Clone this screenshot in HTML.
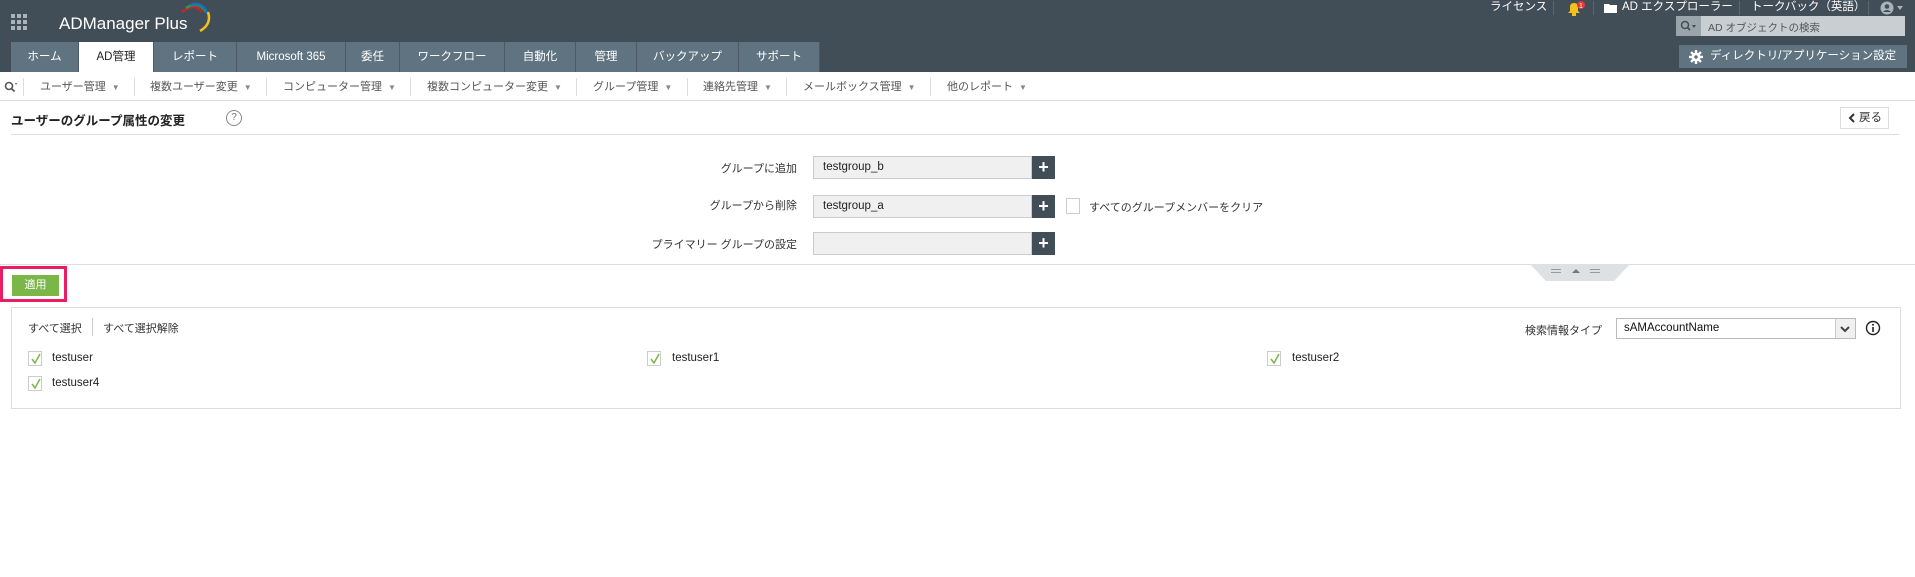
<!DOCTYPE html>
<html><head><meta charset="utf-8"><style>
*{margin:0;padding:0;box-sizing:border-box}
body{width:1915px;height:577px;background:#fff;font-family:"Liberation Sans","Noto Sans CJK JP",sans-serif;font-size:12px;color:#333;position:relative;overflow:hidden}
.abs{position:absolute}
#hdr{left:0;top:0;width:1915px;height:72px;background:#414e58}
.tab{position:absolute;top:42px;height:30px;background:#5f7480;color:#fff;font-size:11.5px;line-height:30px;text-align:center;border-right:1px solid #4b5a64}
.tab.on{background:#fff;color:#222}
.tl{position:absolute;top:0;color:#fff;font-size:11.5px;line-height:14px}
.sn{position:absolute;top:80px;color:#555;font-size:11px;line-height:14px}
.sn i{font-style:normal;color:#888;font-size:8px;margin-left:6px}
.sep{position:absolute;top:78px;width:1px;height:18px;background:#ddd}
.lbl{position:absolute;width:300px;text-align:right;left:497px;color:#333;font-size:11px}
.inp{position:absolute;left:813px;width:219px;height:23px;background:#f0f0f0;border:1px solid #ccc;font-size:11.5px;line-height:21px;padding-left:9px;color:#222}
.plus{position:absolute;left:1032px;width:23px;height:23px;background:#414e58;color:#fff;font-size:18px;font-weight:bold;line-height:22px;text-align:center}
.cb{position:absolute;width:14px;height:15px;border:1px solid #ccc;background:#fff}
.cb svg{position:absolute;left:1px;top:1px}
.u{position:absolute;font-size:11.5px;color:#222}
</style></head><body>
<div id="hdr" class="abs"></div>
<svg class="abs" style="left:11px;top:14px" width="18" height="18"><g fill="#aab3ba"><rect x="0" y="0" width="4" height="4"/><rect x="6" y="0" width="4" height="4"/><rect x="12" y="0" width="4" height="4"/><rect x="0" y="6" width="4" height="4"/><rect x="6" y="6" width="4" height="4"/><rect x="12" y="6" width="4" height="4"/><rect x="0" y="12" width="4" height="4"/><rect x="6" y="12" width="4" height="4"/><rect x="12" y="12" width="4" height="4"/></g></svg>
<div class="abs" style="left:59px;top:14px;color:#fff;font-size:17px;line-height:20px">ADManager Plus</div>
<svg class="abs" style="left:180px;top:2px" width="32" height="30"><path d="M2 10 Q14 0 22 10" stroke="#c0272d" stroke-width="2.5" fill="none"/><path d="M6 6 Q18 -2 26 10" stroke="#2e9a47" stroke-width="2.5" fill="none"/><path d="M10 3 Q22 -1 28 12" stroke="#1f6fb5" stroke-width="2.5" fill="none"/><path d="M28 10 Q32 22 20 29" stroke="#f1c21b" stroke-width="2.5" fill="none"/></svg>
<div class="tab" style="left:11px;width:68px">ホーム</div>
<div class="tab on" style="left:79px;width:75px">AD管理</div>
<div class="tab" style="left:154px;width:83px">レポート</div>
<div class="tab" style="left:237px;width:109px">Microsoft 365</div>
<div class="tab" style="left:346px;width:54px">委任</div>
<div class="tab" style="left:400px;width:105px">ワークフロー</div>
<div class="tab" style="left:505px;width:71px">自動化</div>
<div class="tab" style="left:576px;width:61px">管理</div>
<div class="tab" style="left:637px;width:102px">バックアップ</div>
<div class="tab" style="left:739px;width:81px">サポート</div>
<div class="tl" style="left:1490px;top:0">ライセンス</div>
<div class="abs" style="left:1553px;top:1px;width:1px;height:14px;background:#5a6770"></div>
<svg class="abs" style="left:1566px;top:1px" width="20" height="16"><path d="M2 12 L4 10 L4 6 Q4 2 8 2 Q12 2 12 6 L12 10 L14 12 Z" fill="#f1c21b"/><rect x="6" y="12" width="4" height="3" fill="#f1c21b"/><circle cx="15" cy="4" r="4" fill="#e53935"/><text x="15" y="7" font-size="7" fill="#fff" text-anchor="middle" font-family="Liberation Sans">1</text></svg>
<div class="abs" style="left:1593px;top:1px;width:1px;height:14px;background:#5a6770"></div>
<svg class="abs" style="left:1604px;top:3px" width="13" height="10"><path d="M0 1 H5 L6 2 H13 V10 H0 Z" fill="#fff"/></svg>
<div class="tl" style="left:1622px">AD エクスプローラー</div>
<div class="abs" style="left:1739px;top:1px;width:1px;height:14px;background:#5a6770"></div>
<div class="tl" style="left:1751px">トークバック（英語）</div>
<div class="abs" style="left:1868px;top:1px;width:1px;height:14px;background:#5a6770"></div>
<svg class="abs" style="left:1880px;top:1px" width="28" height="14"><circle cx="7" cy="7" r="6.5" fill="#aab3ba"/><circle cx="7" cy="5.5" r="2.3" fill="#414e58"/><path d="M3 11 Q7 7 11 11" fill="#414e58"/><path d="M17 5 L23 5 L20 9 Z" fill="#aab3ba"/></svg>
<div class="abs" style="left:1676px;top:16px;width:229px;height:20px;background:#c8ced2"></div>
<div class="abs" style="left:1676px;top:16px;width:25px;height:20px;background:#9aa4ab"></div>
<svg class="abs" style="left:1680px;top:20px" width="18" height="12"><circle cx="5" cy="5" r="3.5" stroke="#414e58" stroke-width="1.5" fill="none"/><path d="M7.5 7.5 L10 10" stroke="#414e58" stroke-width="1.8"/><path d="M12 5 L16 5 L14 8 Z" fill="#414e58"/></svg>
<div class="abs" style="left:1708px;top:20px;color:#555;font-size:10.5px">AD オブジェクトの検索</div>
<div class="abs" style="left:1679px;top:45px;width:228px;height:23px;background:#5f7480;color:#fff;font-size:11.5px;line-height:23px;padding-left:31px;white-space:nowrap">ディレクトリ/アプリケーション設定</div>
<svg class="abs" style="left:1689px;top:50px" width="14" height="14" viewBox="0 0 14 14"><g fill="#fff"><circle cx="7" cy="7" r="4.5"/><rect x="5.8" y="0" width="2.4" height="14"/><rect x="0" y="5.8" width="14" height="2.4"/><rect x="5.8" y="0" width="2.4" height="14" transform="rotate(45 7 7)"/><rect x="5.8" y="0" width="2.4" height="14" transform="rotate(-45 7 7)"/></g><circle cx="7" cy="7" r="1.8" fill="#5f7480"/></svg>
<svg class="abs" style="left:4px;top:81px" width="14" height="12"><circle cx="5" cy="5" r="3.5" stroke="#555" stroke-width="1.6" fill="none"/><path d="M7.5 7.5 L10.5 10.5" stroke="#555" stroke-width="1.8"/><path d="M11 2 L13 2 L12 4 Z" fill="#555"/></svg>
<div class="sep" style="left:23px"></div>
<div class="sn" style="left:40px">ユーザー管理<i>▼</i></div>
<div class="sep" style="left:134px"></div>
<div class="sn" style="left:150px">複数ユーザー変更<i>▼</i></div>
<div class="sep" style="left:266px"></div>
<div class="sn" style="left:283px">コンピューター管理<i>▼</i></div>
<div class="sep" style="left:410px"></div>
<div class="sn" style="left:427px">複数コンピューター変更<i>▼</i></div>
<div class="sep" style="left:576px"></div>
<div class="sn" style="left:593px">グループ管理<i>▼</i></div>
<div class="sep" style="left:687px"></div>
<div class="sn" style="left:703px">連絡先管理<i>▼</i></div>
<div class="sep" style="left:786px"></div>
<div class="sn" style="left:803px">メールボックス管理<i>▼</i></div>
<div class="sep" style="left:930px"></div>
<div class="sn" style="left:947px">他のレポート<i>▼</i></div>
<div class="abs" style="left:0;top:100px;width:1915px;height:1px;background:#ddd"></div>
<div class="abs" style="left:11px;top:110px;font-size:12.5px;font-weight:bold;color:#222">ユーザーのグループ属性の変更</div>
<div class="abs" style="left:226px;top:110px;width:16px;height:16px;border:1px solid #888;border-radius:50%;font-size:10px;line-height:14px;text-align:center;color:#777">?</div>
<div class="abs" style="left:1840px;top:107px;width:49px;height:22px;border:1px solid #ddd;font-size:11.5px;line-height:20px;padding-left:18px;color:#333">戻る</div>
<svg class="abs" style="left:1848px;top:113px" width="8" height="10"><path d="M6 1 L2 5 L6 9" stroke="#333" stroke-width="2" fill="none"/></svg>
<div class="abs" style="left:11px;top:134px;width:1888px;height:1px;background:#ddd"></div>
<div class="lbl" style="top:160px">グループに追加</div>
<div class="inp" style="top:156px">testgroup_b</div><div class="plus" style="top:156px">+</div>
<div class="lbl" style="top:197px">グループから削除</div>
<div class="inp" style="top:195px">testgroup_a</div><div class="plus" style="top:195px">+</div>
<div class="cb" style="left:1066px;top:198px;width:14px;height:16px"></div>
<div class="abs" style="left:1089px;top:199px;font-size:11px;color:#333">すべてのグループメンバーをクリア</div>
<div class="lbl" style="top:236px">プライマリー グループの設定</div>
<div class="inp" style="top:232px"></div><div class="plus" style="top:232px">+</div>
<div class="abs" style="left:0;top:264px;width:1915px;height:1px;background:#ddd"></div>
<svg class="abs" style="left:1530px;top:264px" width="100" height="18"><path d="M0 0 H100 L84 17 H16 Z" fill="#dde1e4"/><g fill="#999"><rect x="21" y="5" width="10" height="1"/><rect x="21" y="8" width="10" height="1"/><rect x="60" y="5" width="10" height="1"/><rect x="60" y="8" width="10" height="1"/></g><path d="M42 9 L46 5 L50 9 Z" fill="#777"/></svg>
<div class="abs" style="left:0;top:266px;width:67px;height:36px;border:3px solid #ea1c62"></div>
<div class="abs" style="left:12px;top:275px;width:47px;height:21px;background:#7ab648;color:#fff;font-size:11px;line-height:21px;text-align:center">適用</div>
<div class="abs" style="left:11px;top:307px;width:1890px;height:102px;border:1px solid #ddd"></div>
<div class="abs" style="left:28px;top:320px;font-size:11px;color:#333">すべて選択</div>
<div class="abs" style="left:92px;top:318px;width:1px;height:18px;background:#ccc"></div>
<div class="abs" style="left:103px;top:320px;font-size:11px;color:#333">すべて選択解除</div>
<div class="abs" style="left:1525px;top:322px;font-size:11px;color:#333">検索情報タイプ</div>
<div class="abs" style="left:1616px;top:318px;width:240px;height:21px;border:1px solid #bbb;font-size:11.5px;line-height:19px;padding-left:7px;color:#111">sAMAccountName</div>
<div class="abs" style="left:1835px;top:319px;width:20px;height:19px;background:#f0f0f0;border-left:1px solid #ccc"></div>
<svg class="abs" style="left:1840px;top:325px" width="10" height="8"><path d="M1 2 L5 6 L9 2" stroke="#444" stroke-width="2" fill="none"/></svg>
<svg class="abs" style="left:1865px;top:320px" width="16" height="16"><circle cx="8" cy="8" r="6.5" stroke="#222" stroke-width="1.4" fill="none"/><rect x="7.2" y="7" width="1.6" height="5" fill="#222"/><circle cx="8" cy="4.8" r="1" fill="#222"/></svg>
<div class="cb" style="left:28px;top:351px"><svg width="12" height="12"><path d="M2 6 L5 10 L10 1" stroke="#7ab648" stroke-width="1.5" fill="none"/></svg></div>
<div class="u" style="left:52px;top:352px">testuser</div>
<div class="cb" style="left:647px;top:351px"><svg width="12" height="12"><path d="M2 6 L5 10 L10 1" stroke="#7ab648" stroke-width="1.5" fill="none"/></svg></div>
<div class="u" style="left:672px;top:352px">testuser1</div>
<div class="cb" style="left:1267px;top:351px"><svg width="12" height="12"><path d="M2 6 L5 10 L10 1" stroke="#7ab648" stroke-width="1.5" fill="none"/></svg></div>
<div class="u" style="left:1292px;top:352px">testuser2</div>
<div class="cb" style="left:28px;top:376px"><svg width="12" height="12"><path d="M2 6 L5 10 L10 1" stroke="#7ab648" stroke-width="1.5" fill="none"/></svg></div>
<div class="u" style="left:52px;top:377px">testuser4</div>
</body></html>
